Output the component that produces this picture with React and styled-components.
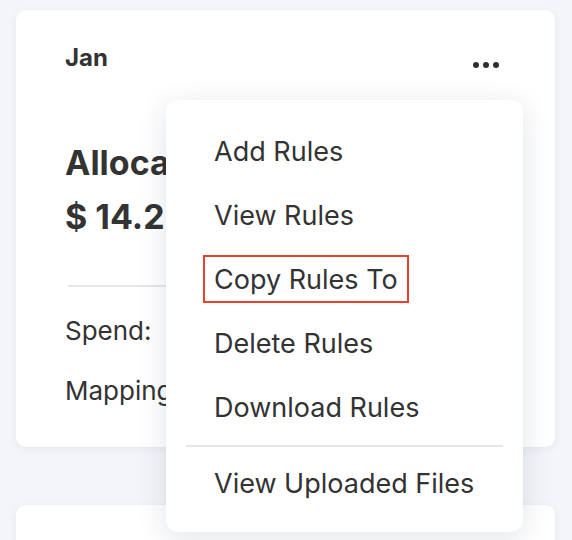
import React, { useState } from "react";
import styled, { createGlobalStyle } from "styled-components";

const GlobalStyle = createGlobalStyle`
  html, body {
    margin: 0;
    padding: 0;
    background: #f4f5f9;
    font-family: Inter, "Noto Sans", sans-serif;
    color: #333333;
  }
`;

const menuItems = [
  "Add Rules",
  "View Rules",
  "Copy Rules To",
  "Delete Rules",
  "Download Rules",
];

const stats = [
  { label: "Spend:", value: "$ 9.80K" },
  { label: "Mapping:", value: "82%" },
];

const App = () => {
  const [selected] = useState("Copy Rules To");
  return (
    <Page>
      <GlobalStyle />
      <Card>
        <Header>
          <Month>Jan</Month>
          <MoreButton aria-label="more">
            <Dot />
            <Dot />
            <Dot />
          </MoreButton>
        </Header>
        <Title>Allocated</Title>
        <Amount>$ 14.25K</Amount>
        <Divider />
        <Stats>
          {stats.map((s) => (
            <Stat key={s.label}>
              <span>{s.label}</span>
              <span>{s.value}</span>
            </Stat>
          ))}
        </Stats>

        <Menu>
          {menuItems.map((item) => (
            <MenuItem key={item} $active={item === selected}>
              {item}
            </MenuItem>
          ))}
          <MenuDivider />
          <MenuItem>View Uploaded Files</MenuItem>
        </Menu>
      </Card>
      <Card $short />
    </Page>
  );
};

export default App;

const Page = styled.div`
  display: flex;
  flex-direction: column;
  gap: 58px;
  padding: 10px 17px 0 16px;
  height: 540px;
  box-sizing: border-box;
  overflow: hidden;
`;

const Card = styled.div`
  position: relative;
  flex-shrink: 0;
  box-sizing: border-box;
  height: ${(p) => (p.$short ? "120px" : "437px")};
  padding: 33px 49px 0 49px;
  background: #ffffff;
  border-radius: 10px;
  box-shadow: 0 2px 10px rgba(30, 40, 90, 0.06);
`;

const Header = styled.div`
  display: flex;
  justify-content: space-between;
  align-items: flex-start;
`;

const Month = styled.div`
  font-size: 24px;
  line-height: 29px;
  font-weight: 700;
  color: #333333;
`;

const MoreButton = styled.div`
  display: flex;
  gap: 4px;
  margin-top: 19px;
  margin-right: 7px;
`;

const Dot = styled.span`
  width: 6px;
  height: 6px;
  border-radius: 50%;
  background: #2f2f2f;
`;

const Title = styled.div`
  margin-top: 64px;
  font-size: 34px;
  line-height: 54px;
  font-weight: 700;
  white-space: nowrap;
`;

const Amount = styled(Title)`
  margin-top: 0;
`;

const Divider = styled.div`
  height: 2px;
  margin: 41px 0 0 3px;
  background: #e7e7ea;
`;

const Stats = styled.div`
  margin-top: 14px;
  display: flex;
  flex-direction: column;
`;

const Stat = styled.div`
  display: flex;
  justify-content: space-between;
  font-size: 26px;
  line-height: 60px;
  white-space: nowrap;
`;

const Menu = styled.div`
  position: absolute;
  left: 150px;
  top: 90px;
  width: 357px;
  box-sizing: border-box;
  padding: 27px 20px 25px;
  display: flex;
  flex-direction: column;
  gap: 16px;
  background: #ffffff;
  border-radius: 12px;
  box-shadow: 0 6px 30px rgba(20, 30, 70, 0.12);
  z-index: 2;
`;

const MenuItem = styled.div`
  align-self: flex-start;
  margin: 0 17px;
  padding: 0 9px;
  height: 48px;
  display: flex;
  align-items: center;
  font-size: 27px;
  color: #333333;
  white-space: nowrap;
  border: 2px solid ${(p) => (p.$active ? "#e5432b" : "transparent")};
  box-sizing: border-box;
`;

const MenuDivider = styled.div`
  height: 2px;
  margin: -2px 0 -4px;
  background: #e6e6e9;
`;
